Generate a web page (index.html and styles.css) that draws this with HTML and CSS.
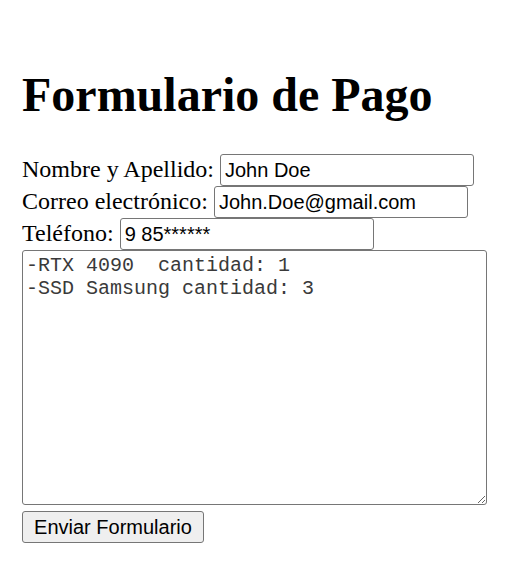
FILE: index.html
```html
<!DOCTYPE html>
<html lang="es">
<head>
<meta charset="utf-8">
<title>Formulario de Pago</title>
<link rel="stylesheet" href="styles.css">
</head>
<body>
<h1 class="title">Formulario de Pago</h1>
<form class="form">
  <div class="row">
    <label class="label" for="nombre">Nombre y Apellido:</label>
    <input class="field" id="nombre" type="text" value="John Doe">
  </div>
  <div class="row">
    <label class="label" for="correo">Correo electrónico:</label>
    <input class="field" id="correo" type="email" value="John.Doe@gmail.com">
  </div>
  <div class="row">
    <label class="label" for="tel">Teléfono:</label>
    <input class="field" id="tel" type="text" value="9 85******">
  </div>
  <textarea class="items">-RTX 4090  cantidad: 1
-SSD Samsung cantidad: 3</textarea>
  <div class="actions">
    <button class="submit" type="button">Enviar Formulario</button>
  </div>
</form>
</body>
</html>
```

FILE: styles.css
```css
html, body {
  background: #ffffff;
}
body {
  margin: 0;
  padding: 36px 22px 0;
  font-family: "Liberation Serif", "Times New Roman", serif;
  font-size: 24px;
  color: #000;
}
.title {
  margin: 32px 0 33px;
  font-size: 48px;
  line-height: 53px;
  font-weight: bold;
}
.form {
  display: flex;
  flex-direction: column;
  align-items: flex-start;
}
.row {
  display: flex;
  align-items: baseline;
  gap: 6px;
  height: 32px;
}
.label {
  font-size: 24px;
}
.field {
  box-sizing: border-box;
  width: 254px;
  height: 32px;
  margin: 0;
  padding: 0 4px;
  border: 1px solid #767676;
  border-radius: 3px;
  font-family: "Liberation Sans", Arial, sans-serif;
  font-size: 20px;
  color: #000;
  background: #fff;
}
.items {
  box-sizing: border-box;
  width: 465px;
  height: 255px;
  margin: 0;
  padding: 3px 3px;
  border: 1px solid #767676;
  border-radius: 3px;
  font-family: "Liberation Mono", "Courier New", monospace;
  font-size: 20px;
  line-height: 23px;
  color: #3a3a3a;
  background: #fff;
}
.actions {
  margin-top: 6px;
}
.submit {
  box-sizing: border-box;
  height: 32px;
  width: 182px;
  margin: 0;
  padding: 0 9px;
  border: 1px solid #767676;
  border-radius: 3px;
  background: #efefef;
  font-family: "Liberation Sans", Arial, sans-serif;
  font-size: 20px;
  color: #000;
}
```
